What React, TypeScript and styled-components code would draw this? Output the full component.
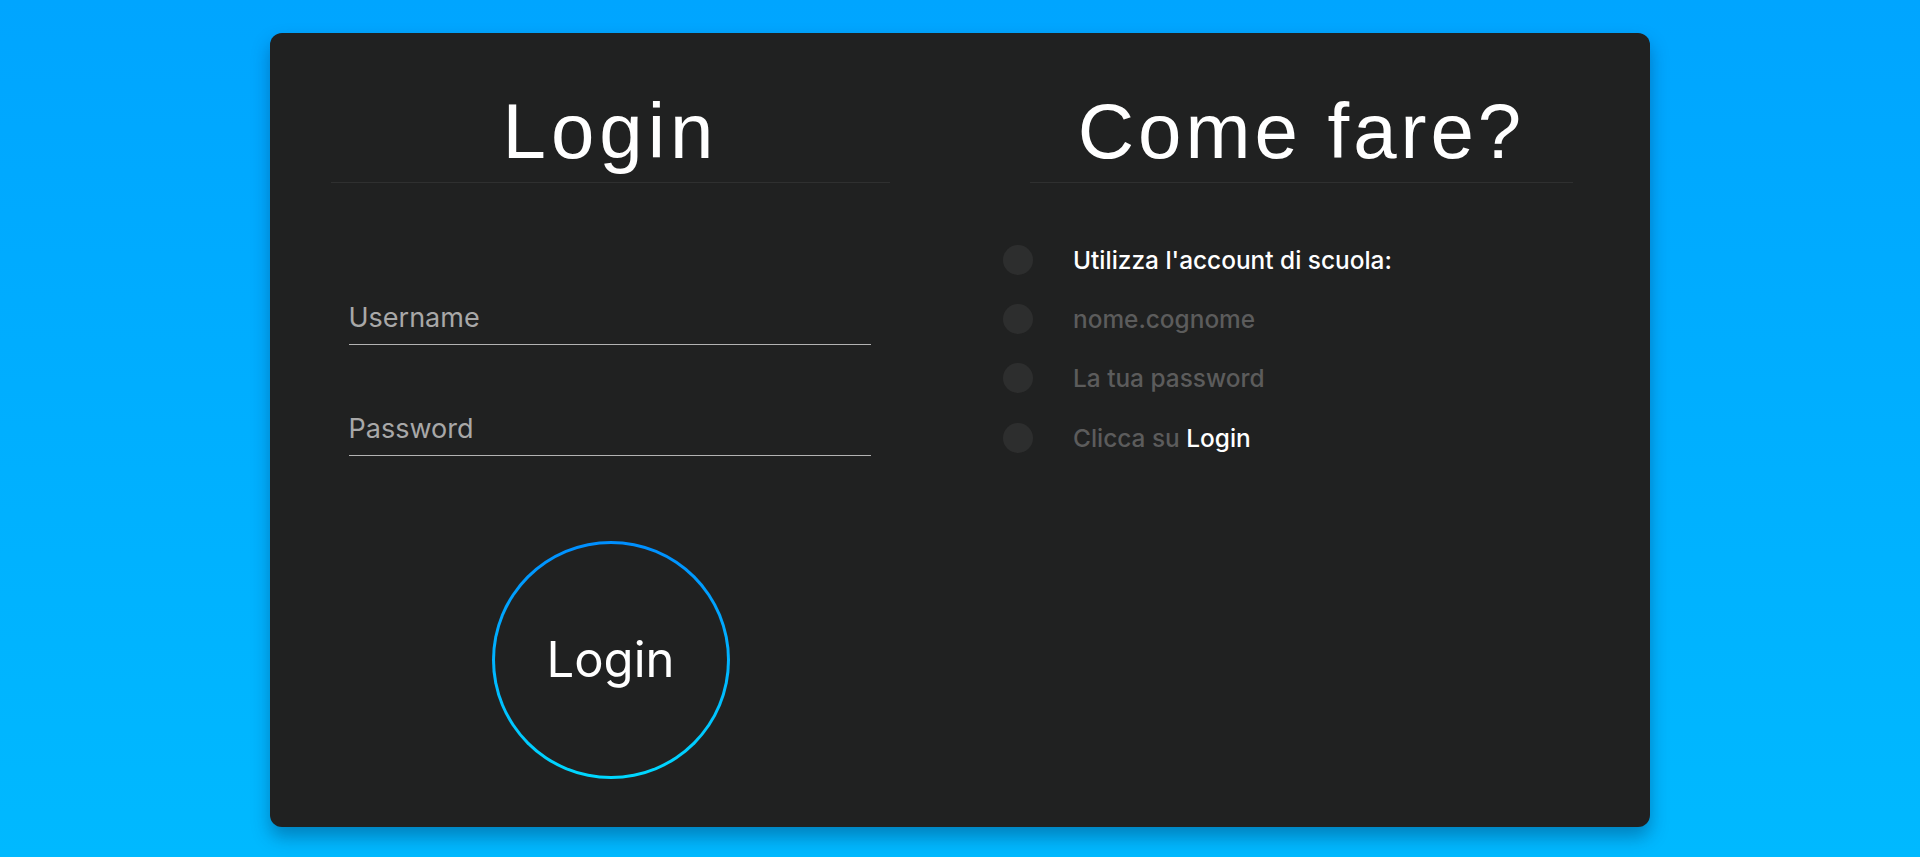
import React from "react";
import styled, { createGlobalStyle } from "styled-components";

const GlobalStyle = createGlobalStyle`
  html, body {
    margin: 0;
    padding: 0;
    height: 100%;
  }
  body {
    background: linear-gradient(to bottom, #00a5ff 0%, #00b9ff 100%);
    min-height: 857px;
    font-family: Inter, "Open Sans", sans-serif;
    overflow: hidden;
  }
`;

const Page = styled.div`
  width: 100%;
  height: 857px;
  padding-top: 33px;
  box-sizing: border-box;
`;

const Card = styled.div`
  width: 1380px;
  height: 794px;
  margin: 0 auto;
  background: #202121;
  border-radius: 12px;
  box-shadow: 0 10px 18px rgba(0, 30, 70, 0.35);
  display: flex;
`;

const Column = styled.div<{ $pl: number; $pr: number }>`
  flex: 0 0 690px;
  box-sizing: border-box;
  padding: 59px ${(p) => p.$pr}px 0 ${(p) => p.$pl}px;
  display: flex;
  flex-direction: column;
`;

const Heading = styled.h1<{ $ml?: number; $w: number; $ls: number }>`
  margin: 0 0 0 ${(p) => p.$ml ?? 0}px;
  width: ${(p) => p.$w}px;
  padding: 0 0 12px;
  border-bottom: 1px solid #2f3030;
  font-family: "Liberation Sans", Arial, sans-serif;
  font-weight: 400;
  font-size: 78px;
  line-height: 78px;
  letter-spacing: ${(p) => p.$ls}px;
  color: #ffffff;
  text-align: center;
`;

const Form = styled.form`
  display: flex;
  flex-direction: column;
  align-items: center;
  gap: 67px;
  margin-top: 118px;
`;

const Input = styled.input`
  width: 522px;
  margin-left: -2px;
  box-sizing: border-box;
  background: transparent;
  border: none;
  border-bottom: 1px solid #b3b3b3;
  outline: none;
  padding: 0 0 9px 0;
  font-family: Inter, "Open Sans", sans-serif;
  font-size: 27px;
  line-height: 34px;
  color: #ffffff;
  &::placeholder {
    color: #a8a8a8;
  }
`;

const CircleButton = styled.button`
  width: 238px;
  height: 238px;
  margin-top: 18px;
  border-radius: 50%;
  border: 3px solid transparent;
  background: linear-gradient(#202121, #202121) padding-box,
    linear-gradient(to bottom, #008fff, #00d8ff) border-box;
  color: #ffffff;
  font-family: Inter, "Open Sans", sans-serif;
  font-size: 49px;
  font-weight: 400;
  display: flex;
  align-items: center;
  justify-content: center;
  cursor: pointer;
  padding: 0 0 2px;
`;

const Steps = styled.ul`
  list-style: none;
  margin: 47px 0 0 -1px;
  padding: 0;
  display: flex;
  flex-direction: column;
`;

const Step = styled.li`
  display: flex;
  align-items: center;
  height: 59.3px;
  gap: 40px;
`;

const Dot = styled.span`
  flex: 0 0 30px;
  width: 30px;
  height: 30px;
  border-radius: 50%;
  background: #2d2e2e;
`;

const StepText = styled.span<{ $bright?: boolean }>`
  font-family: Inter, "Open Sans", sans-serif;
  font-size: 24.4px;
  font-weight: 500;
  color: ${(p) => (p.$bright ? "#ffffff" : "#5c5c5c")};
`;

const Hl = styled.span`
  color: #ffffff;
`;

export default function App() {
  return (
    <>
      <GlobalStyle />
      <Page>
        <Card>
          <Column $pl={61} $pr={70}>
            <Heading $w={559} $ls={5}>
              Login
            </Heading>
            <Form onSubmit={(e) => e.preventDefault()}>
              <Input type="text" placeholder="Username" />
              <Input type="password" placeholder="Password" />
              <CircleButton type="submit">Login</CircleButton>
            </Form>
          </Column>
          <Column $pl={44} $pr={77}>
            <Heading $ml={26} $w={543} $ls={4}>
              Come fare?
            </Heading>
            <Steps>
              <Step>
                <Dot />
                <StepText $bright>Utilizza l'account di scuola:</StepText>
              </Step>
              <Step>
                <Dot />
                <StepText>nome.cognome</StepText>
              </Step>
              <Step>
                <Dot />
                <StepText>La tua password</StepText>
              </Step>
              <Step>
                <Dot />
                <StepText>
                  Clicca su <Hl>Login</Hl>
                </StepText>
              </Step>
            </Steps>
          </Column>
        </Card>
      </Page>
    </>
  );
}
